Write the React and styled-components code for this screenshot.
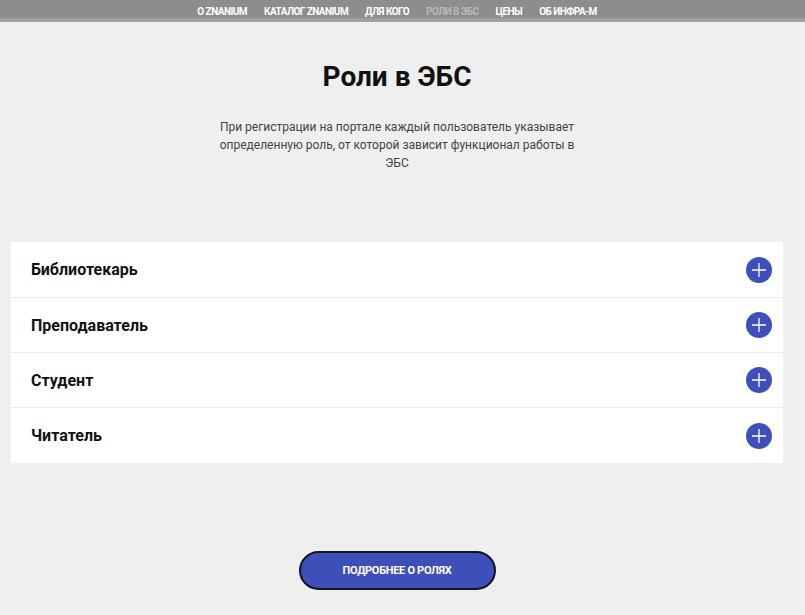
import React from "react"
import styled, { createGlobalStyle } from "styled-components"

const GlobalStyle = createGlobalStyle`
  body {
    margin: 0;
    background: #efefef;
    font-family: Roboto, "Liberation Sans", sans-serif;
  }
`

const Nav = styled.nav`
  height: 22px;
  background: linear-gradient(#8d8d8d 0, #8d8d8d 18px, #9a9a9a 18px, #a4a4a4 22px);
  display: flex;
  justify-content: center;
  gap: 17px;
  padding-right: 11px;
`

const NavLink = styled.a`
  font-family: Roboto, "Liberation Sans Narrow", sans-serif;
  font-size: 10px;
  font-weight: 700;
  letter-spacing: -0.55px;
  line-height: 23px;
  color: ${props => (props.active ? "#b9b9b9" : "#ffffff")};
  text-transform: uppercase;
  white-space: nowrap;
`

const Main = styled.main`
  display: flex;
  flex-direction: column;
  align-items: center;
  margin-right: 11px;
`

const Title = styled.h1`
  margin: 38px 0 0;
  font-size: 28px;
  font-weight: 700;
  color: #111;
  line-height: 34px;
`

const Lead = styled.p`
  width: 370px;
  margin: 24px 0 0;
  font-size: 12px;
  line-height: 18px;
  color: #444;
  text-align: center;
`

const Accordion = styled.div`
  align-self: stretch;
  margin: 70px 11px 0 11px;
  background: #fff;
`

const Row = styled.div`
  box-sizing: border-box;
  height: ${props => (props.last ? "56px" : "55px")};
  display: flex;
  align-items: center;
  justify-content: space-between;
  padding: 0 11px 0 20px;
  border-top: ${props => (props.first ? "none" : "1px solid #ebebeb")};
`

const RowTitle = styled.span`
  font-size: 16px;
  font-weight: 700;
  color: #111;
`

const PlusButton = styled.span`
  width: 26px;
  height: 26px;
  border-radius: 50%;
  background: #3f4fb9;
  display: flex;
  align-items: center;
  justify-content: center;
`

const MoreButton = styled.button`
  margin: 88px 0 26px;
  width: 197px;
  height: 39px;
  border-radius: 20px;
  border: 2px solid #14141e;
  background: #3f4fb9;
  color: #fff;
  font-family: Roboto, "Liberation Sans Narrow", sans-serif;
  font-size: 11px;
  font-weight: 700;
  letter-spacing: -0.3px;
  text-transform: uppercase;
`

const Plus = () => (
  <PlusButton>
    <svg width="16" height="16" viewBox="0 0 16 16">
      <path d="M8 1v14M1 8h14" stroke="#fff" strokeWidth="1.3" />
    </svg>
  </PlusButton>
)

const links = ["О ZNANIUM", "Каталог ZNANIUM", "Для кого", "Роли в ЭБС", "Цены", "Об ИНФРА-М"]
const roles = ["Библиотекарь", "Преподаватель", "Студент", "Читатель"]

const App = () => {
  return (
    <>
      <GlobalStyle />
      <Nav>
        {links.map(l => (
          <NavLink key={l} active={l === "Роли в ЭБС"}>
            {l}
          </NavLink>
        ))}
      </Nav>
      <Main>
        <Title>Роли в ЭБС</Title>
        <Lead>
          При регистрации на портале каждый пользователь указывает определенную роль, от которой
          зависит функционал работы в ЭБС
        </Lead>
        <Accordion>
          {roles.map((r, i) => (
            <Row key={r} first={i === 0} last={i === roles.length - 1}>
              <RowTitle>{r}</RowTitle>
              <Plus />
            </Row>
          ))}
        </Accordion>
        <MoreButton>Подробнее о ролях</MoreButton>
      </Main>
    </>
  )
}

export default App
